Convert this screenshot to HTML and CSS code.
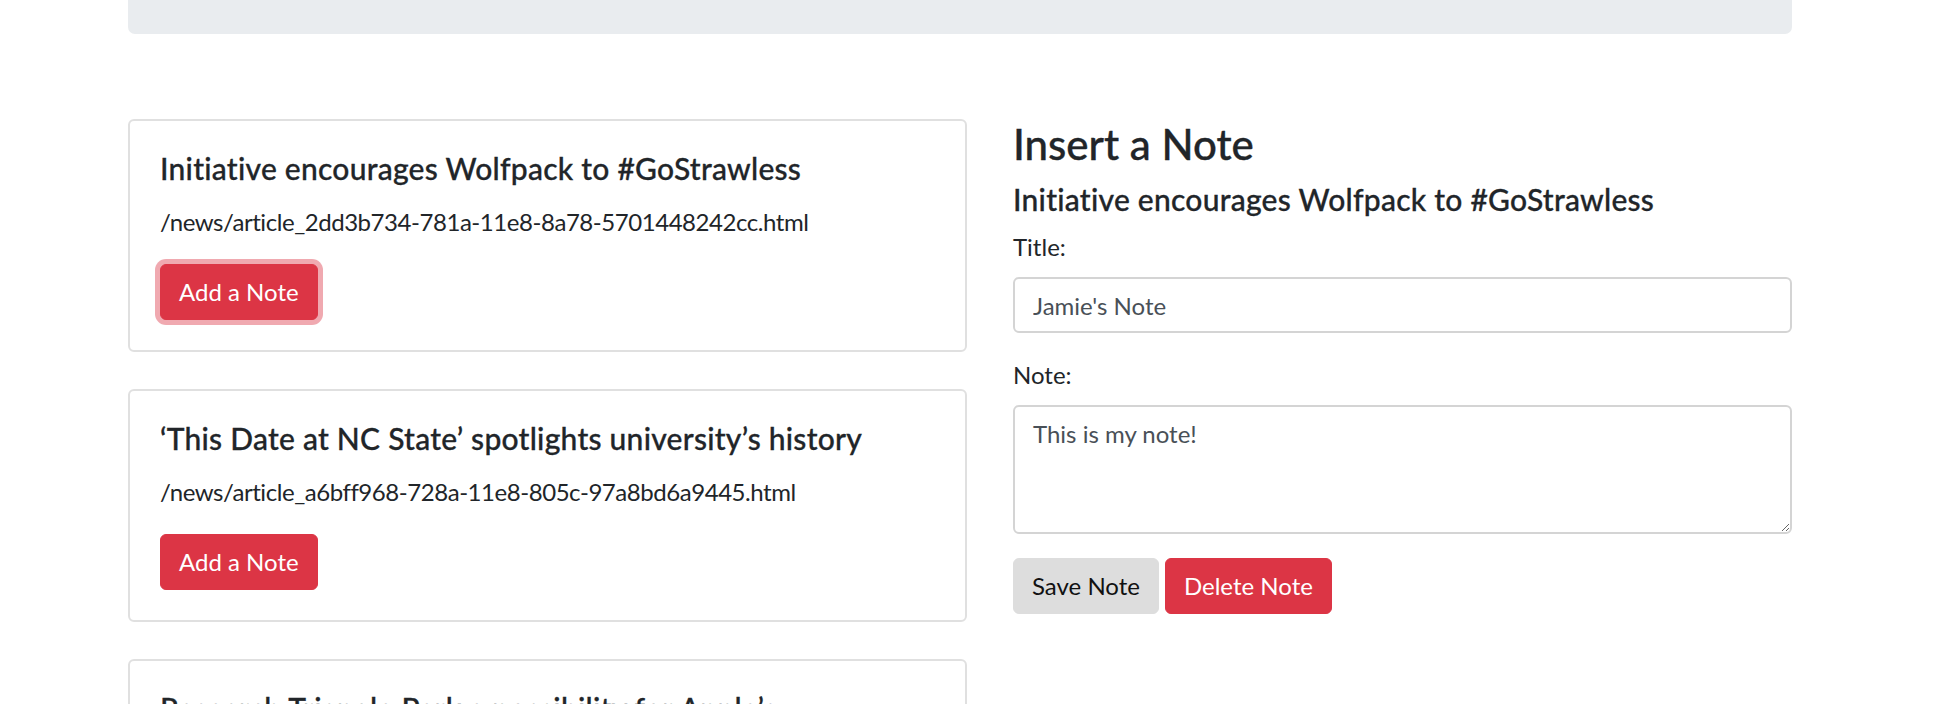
FILE: index.html
```html
<!DOCTYPE html>
<html lang="en">
<head>
<meta charset="utf-8">
<title>Scraped Articles</title>
<link rel="stylesheet" href="styles.css">
</head>
<body>
<div class="container">
  <div class="jumbotron"></div>
  <div class="row">
    <div class="articles">
      <div class="card">
        <h5 class="card-title">Initiative encourages Wolfpack to #GoStrawless</h5>
        <p class="card-text">/news/article_2dd3b734-781a-11e8-8a78-5701448242cc.html</p>
        <button class="btn btn-danger focused">Add a Note</button>
      </div>
      <div class="card">
        <h5 class="card-title">‘This Date at NC State’ spotlights university’s history</h5>
        <p class="card-text">/news/article_a6bff968-728a-11e8-805c-97a8bd6a9445.html</p>
        <button class="btn btn-danger">Add a Note</button>
      </div>
      <div class="card">
        <h5 class="card-title">Research Triangle Park a possibility for Apple’s</h5>
        <p class="card-text">/news/article.html</p>
        <button class="btn btn-danger">Add a Note</button>
      </div>
    </div>
    <div class="notes">
      <h3 class="notes-heading">Insert a Note</h3>
      <h5 class="notes-article">Initiative encourages Wolfpack to #GoStrawless</h5>
      <div class="form-group">
        <label class="form-label" for="title">Title:</label>
        <input class="form-control" id="title" type="text" value="Jamie's Note">
      </div>
      <div class="form-group">
        <label class="form-label" for="note">Note:</label>
        <textarea class="form-control textarea" id="note" rows="3">This is my note!</textarea>
      </div>
      <div class="actions"><button class="btn btn-save">Save Note</button> <button class="btn btn-danger">Delete Note</button></div>
    </div>
  </div>
</div>
</body>
</html>
```
FILE: styles.css
```css
html, body {
  margin: 0;
  padding: 0;
  background: #fff;
}
body {
  font-family: "Segoe UI", Lato, "Liberation Sans", sans-serif;
  font-size: 24px;
  line-height: 36px;
  color: #212529;
}
.container {
  width: 1664px;
  margin-left: 128px;
}
.jumbotron {
  height: 34px;
  background: #e9ecef;
  border-radius: 0 0 7px 7px;
}
.row {
  display: grid;
  grid-template-columns: 839px 779px;
  column-gap: 46px;
  margin-top: 85px;
  align-items: start;
}
.articles {
  display: flex;
  flex-direction: column;
  gap: 37px;
}
.card {
  border: 2px solid #e0e0e0;
  border-radius: 6px;
  padding: 29px 30px 30px;
  background: #fff;
}
.card-title {
  margin: 0 0 18px;
  font-size: 30px;
  line-height: 36px;
  font-weight: 500;
  -webkit-text-stroke: 0.3px currentColor;
  letter-spacing: 0.25px;
}
.card-text {
  margin: 0 0 24px;
  letter-spacing: -0.45px;
}
.btn {
  font-family: inherit;
  font-size: 24px;
  line-height: 36px;
  padding: 9px 18px;
  border: 1px solid transparent;
  border-radius: 6px;
  cursor: pointer;
}
.btn-danger {
  background: #dc3545;
  border-color: #dc3545;
  color: #fff;
}
.btn-danger.focused {
  box-shadow: 0 0 0 5px rgba(225, 83, 97, 0.5);
}
.btn-save {
  background: #dddddd;
  border-color: #dddddd;
  color: #111;
}
.notes-heading {
  margin: 0 0 12px;
  font-size: 42px;
  line-height: 50px;
  font-weight: 500;
  -webkit-text-stroke: 0.35px currentColor;
}
.notes-article {
  margin: 0 0 12px;
  font-size: 30px;
  line-height: 36px;
  font-weight: 500;
  -webkit-text-stroke: 0.3px currentColor;
  letter-spacing: 0.25px;
}
.form-group {
  margin-bottom: 24px;
}
.form-label {
  display: block;
  margin-bottom: 12px;
}
.form-control {
  display: block;
  box-sizing: border-box;
  width: 100%;
  height: 56px;
  padding: 9px 18px;
  font-family: inherit;
  font-size: 24px;
  line-height: 36px;
  color: #495057;
  background: #fff;
  border: 2px solid #d4d4d4;
  border-radius: 6px;
  margin: 0;
}
.textarea {
  height: 129px;
  resize: vertical;
}
.actions {
  display: flex;
  gap: 6px;
  margin-top: 1px;
}
```
